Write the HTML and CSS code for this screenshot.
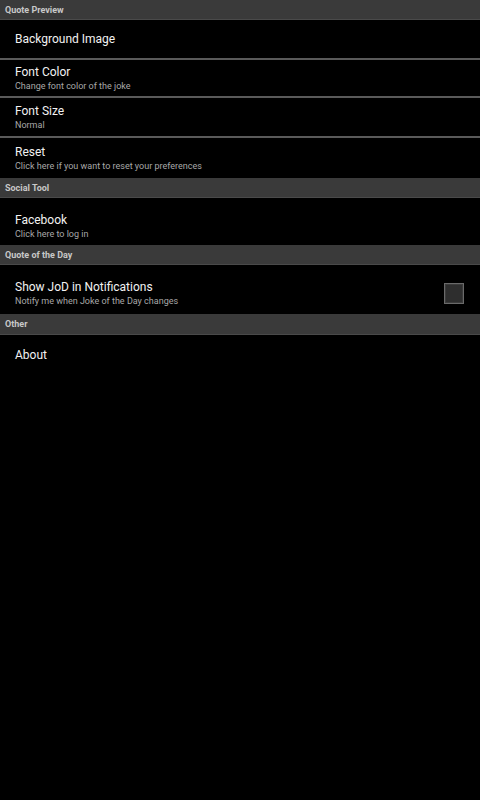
FILE: index.html
```html
<!DOCTYPE html>
<html>
<head>
<meta charset="utf-8">
<link rel="stylesheet" href="styles.css">
</head>
<body>
<div class="screen">
  <div class="cat">Quote Preview</div>
  <div class="item h38"><div class="title">Background Image</div></div>
  <div class="sep"></div>
  <div class="item h36"><div class="title">Font Color</div><div class="sub">Change font color of the joke</div></div>
  <div class="sep"></div>
  <div class="item h38"><div class="title">Font Size</div><div class="sub">Normal</div></div>
  <div class="sep"></div>
  <div class="item h40"><div class="title">Reset</div><div class="sub">Click here if you want to reset your preferences</div></div>
  <div class="cat">Social Tool</div>
  <div class="item h47 pt9"><div class="title">Facebook</div><div class="sub">Click here to log in</div></div>
  <div class="cat">Quote of the Day</div>
  <div class="item h49 pt7 row">
    <div class="texts"><div class="title">Show JoD in Notifications</div><div class="sub">Notify me when Joke of the Day changes</div></div>
    <div class="check"></div>
  </div>
  <div class="cat cat21">Other</div>
  <div class="item h40"><div class="title">About</div></div>
</div>
</body>
</html>
```
FILE: styles.css
```css
html, body { margin: 0; padding: 0; background: #000; }
.screen {
  width: 480px; height: 800px; background: #000;
  font-family: Roboto, "Noto Sans", sans-serif;
  display: flex; flex-direction: column;
}
.cat {
  height: 20px; box-sizing: border-box;
  background: #3a3a3a; border-bottom: 1px solid #4a4a4a;
  color: #c8c8c8; font-weight: bold; font-size: 9px;
  padding-left: 5px; display: flex; align-items: center;
  flex-shrink: 0;
}
.cat21 { height: 21px; }
.item {
  display: flex; flex-direction: column; justify-content: center;
  padding-left: 15px; box-sizing: border-box; flex-shrink: 0;
}
.row { flex-direction: row; align-items: center; justify-content: space-between; padding-right: 16px; }
.texts { display: flex; flex-direction: column; }
.pt9 { padding-top: 9px; }
.pt7 { padding-top: 7px; }
.h36 { height: 36px; }
.h38 { height: 38px; }
.h40 { height: 40px; }
.h47 { height: 47px; }
.h49 { height: 49px; }
.sep { height: 2px; background: #5a5a5a; flex-shrink: 0; }
.title { color: #f2f2f2; font-size: 12px; line-height: 15px; }
.sub { color: #a8a8a8; font-size: 9px; line-height: 12px; }
.check {
  width: 20px; height: 21px; box-sizing: border-box;
  border: 1px solid #6a6a6a; background: #2e2e2e;
  box-shadow: inset 0 0 0 1px #3c3c3c;
}
```
